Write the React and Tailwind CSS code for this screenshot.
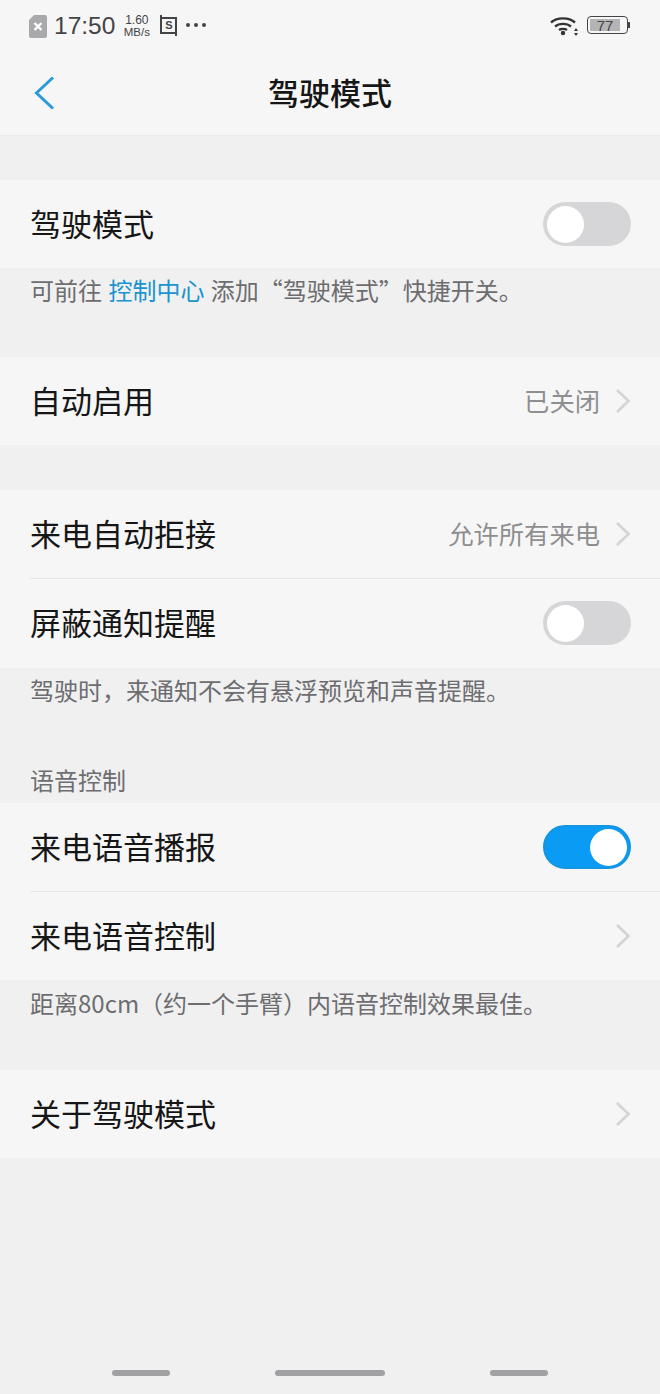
import React from "react";

const FONT = "font-['Noto_Sans_CJK_SC','Noto_Sans',sans-serif]";

function Chevron() {
  return (
    <svg width="16" height="26" viewBox="0 0 16 26" fill="none" className="shrink-0">
      <path d="M2 2 L13.5 13 L2 24" stroke="#d4d4d6" strokeWidth="2.6" />
    </svg>
  );
}

function Toggle({ on }) {
  return on ? (
    <div className="flex h-[44px] w-[88px] items-center justify-end rounded-full border-2 border-[#1595de] bg-[#0a9bf5] pr-[2px]">
      <div className="h-[37px] w-[37px] rounded-full bg-white" />
    </div>
  ) : (
    <div className="flex h-[44px] w-[88px] items-center rounded-full bg-[#d6d6d8] pl-[4px]">
      <div className="h-[37px] w-[37px] rounded-full bg-white" />
    </div>
  );
}

function Row({ label, value, chevron, toggle, divider }) {
  return (
    <div className="pl-[30px]">
      <div className="flex h-[88px] items-center justify-between pr-[29px]">
        <span className="mb-[4px] text-[31px] leading-none text-[#161616]">{label}</span>
        <div className="flex items-center">
          {value && <span className="mb-[1px] mr-[15px] text-[25.3px] leading-none text-[#8e8e90]">{value}</span>}
          {chevron && <Chevron />}
          {toggle !== undefined && <Toggle on={toggle} />}
        </div>
      </div>
      {divider && <div className="h-px bg-[#e6e6e8]" />}
    </div>
  );
}

function Caption({ children, className }) {
  return <p className={`pl-[30px] text-[24px] leading-[24px] text-[#6d6d70] ${className}`}>{children}</p>;
}

function StatusBar() {
  return (
    <div className="flex h-[52px] items-center justify-between pl-[29px] pr-[30px]">
      <div className="flex items-center">
        <svg width="18" height="23" viewBox="0 0 18 23">
          <path d="M5 0 H16 a2 2 0 0 1 2 2 V21 a2 2 0 0 1 -2 2 H2 a2 2 0 0 1 -2 -2 V5 Z" fill="#a9a9ab" />
          <path d="M5.5 8 L12.5 15 M12.5 8 L5.5 15" stroke="#fff" strokeWidth="2.4" />
        </svg>
        <span className="ml-[7px] font-['Liberation_Sans',sans-serif] text-[24.5px] leading-none text-[#444446]">17:50</span>
        <div className="ml-[8px] flex w-[27px] flex-col items-center font-['Liberation_Sans',sans-serif] text-[12px] leading-[12px] text-[#444446]">
          <span>1.60</span>
          <span className="text-[11.5px]">MB/s</span>
        </div>
        <div className="relative mb-[1px] ml-[10px] flex h-[17px] w-[17px] items-center justify-center border-2 border-[#444446] font-['Liberation_Sans',sans-serif] text-[11px] font-bold leading-none text-[#444446]">
          S
          <div className="absolute left-[-2px] top-[-4px] h-[3px] w-[2px] bg-[#444446]" />
          <div className="absolute bottom-[-4px] right-[-2px] h-[3px] w-[2px] bg-[#444446]" />
        </div>
        <div className="mb-[2px] ml-[9px] flex gap-[4px]">
          <div className="h-[4px] w-[4px] rounded-full bg-[#444446]" />
          <div className="h-[4px] w-[4px] rounded-full bg-[#444446]" />
          <div className="h-[4px] w-[4px] rounded-full bg-[#444446]" />
        </div>
      </div>
      <div className="flex items-center">
        <svg width="28" height="20" viewBox="0 0 28 20" fill="none">
          <path d="M1 6.5 C7 1 19 1 25 6.5" stroke="#333" strokeWidth="2.4" />
          <path d="M5 10.5 C9 7 17 7 21 10.5" stroke="#333" strokeWidth="2.4" />
          <path d="M9 14 C11 12.5 15 12.5 17 14" stroke="#333" strokeWidth="2.4" />
          <circle cx="13" cy="17" r="2.2" fill="#333" />
          <path d="M26 12 L28 15 H24 Z M26 20 L28 17 H24 Z" fill="#333" />
        </svg>
        <div className="mb-[2px] ml-[9px] flex items-center">
          <div className="flex h-[18px] w-[41px] items-center rounded-[4px] border border-[#444] p-[2px]">
            <div className="flex h-full w-[30px] items-center justify-center bg-[#b4b4b6] font-['Liberation_Sans',sans-serif] text-[15px] leading-none text-[#444]">
              77
            </div>
          </div>
          <div className="h-[6px] w-[2px] bg-[#444]" />
        </div>
      </div>
    </div>
  );
}

export default function App() {
  return (
    <div className={`flex h-[1394px] w-[660px] flex-col bg-[#f0f0f1] ${FONT}`}>
      <header className="h-[136px] border-b border-[#ebebec] bg-[#f6f6f7]">
        <StatusBar />
        <div className="flex h-[81px] items-center pl-[34px]">
          <svg width="22" height="34" viewBox="0 0 22 34" fill="none">
            <path d="M19 1.5 L2.5 17 L19 32.5" stroke="#2a9bd8" strokeWidth="3" />
          </svg>
          <h1 className="mb-[3px] ml-[212px] text-[31px] font-medium leading-none text-[#161616]">驾驶模式</h1>
        </div>
      </header>

      <section className="mt-[44px] bg-[#f6f6f7]">
        <Row label="驾驶模式" toggle={false} />
      </section>
      <Caption className="mb-[55px] mt-[10px]">
        可前往 <span className="mx-[1px] text-[#1a94cf]">控制中心</span> 添加“驾驶模式”快捷开关。
      </Caption>

      <section className="bg-[#f6f6f7]">
        <Row label="自动启用" value="已关闭" chevron />
      </section>

      <section className="mt-[45px] bg-[#f6f6f7]">
        <Row label="来电自动拒接" value="允许所有来电" chevron divider />
        <div className="pb-px">
          <Row label="屏蔽通知提醒" toggle={false} />
        </div>
      </section>
      <Caption className="mt-[10px]">驾驶时，来通知不会有悬浮预览和声音提醒。</Caption>

      <Caption className="mt-[66px]">语音控制</Caption>
      <section className="mt-[11px] bg-[#f6f6f7]">
        <Row label="来电语音播报" toggle={true} divider />
        <Row label="来电语音控制" chevron />
      </section>
      <Caption className="mb-[55px] mt-[11px]">距离80cm（约一个手臂）内语音控制效果最佳。</Caption>

      <section className="bg-[#f6f6f7]">
        <Row label="关于驾驶模式" chevron />
      </section>

      <nav className="mt-auto flex h-[44px] items-start pt-[20px]">
        <div className="ml-[112px] h-[6px] w-[58px] rounded-full bg-[#a1a1a3]" />
        <div className="ml-[105px] h-[6px] w-[110px] rounded-full bg-[#a1a1a3]" />
        <div className="ml-[105px] h-[6px] w-[58px] rounded-full bg-[#a1a1a3]" />
      </nav>
    </div>
  );
}
